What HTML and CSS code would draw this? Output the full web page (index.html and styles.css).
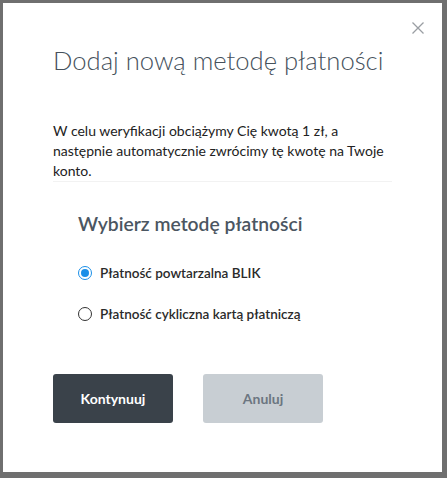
FILE: index.html
```html
<!DOCTYPE html>
<html lang="pl">
<head>
<meta charset="utf-8">
<link rel="stylesheet" href="styles.css">
</head>
<body>
<div class="backdrop">
  <div class="modal">
    <button class="close" aria-label="Zamknij">
      <svg width="12" height="12" viewBox="0 0 12 12"><path d="M0.5 0.5L11.5 11.5M11.5 0.5L0.5 11.5" stroke="#9a9ea3" stroke-width="1.3" fill="none"/></svg>
    </button>
    <h1 class="title">Dodaj nową metodę płatności</h1>
    <p class="info">W celu weryfikacji obciążymy Cię kwotą 1 zł, a następnie automatycznie zwrócimy tę kwotę na Twoje konto.</p>
    <div class="methods">
      <h2 class="subtitle">Wybierz metodę płatności</h2>
      <label class="option"><span class="radio checked"></span>Płatność powtarzalna BLIK</label>
      <label class="option"><span class="radio"></span>Płatność cykliczna kartą płatniczą</label>
    </div>
    <div class="actions">
      <button class="btn primary">Kontynuuj</button>
      <button class="btn secondary">Anuluj</button>
    </div>
  </div>
</div>
</body>
</html>
```
FILE: styles.css
```css
html, body {
  margin: 0;
  padding: 0;
}
body {
  background: #6f6f6f;
  font-family: "Lato", "Open Sans", sans-serif;
}
.backdrop {
  padding: 3px 5px 6px 3px;
  height: 478px;
  box-sizing: border-box;
}
.modal {
  position: relative;
  background: #fff;
  height: 469px;
  box-sizing: border-box;
  padding: 0 50px;
}
.close {
  position: absolute;
  top: 19px;
  right: 18px;
  width: 12px;
  height: 12px;
  padding: 0;
  border: 0;
  background: none;
  display: block;
}
.close svg { display: block; }
.title {
  margin: 0;
  padding-top: 39px;
  font-size: 25.6px;
  font-weight: 300;
  line-height: 36px;
  color: #46515c;
  white-space: nowrap;
}
.info {
  margin: 43px 0 0;
  font-size: 14px;
  line-height: 20px;
  color: #222;
  border-bottom: 1px solid #f2f2f2;
}
.methods {
  padding-left: 25px;
  padding-top: 28px;
}
.subtitle {
  margin: 0 0 25px;
  font-size: 19.3px;
  font-weight: 600;
  line-height: 28px;
  color: #4b5661;
}
.option {
  display: flex;
  align-items: center;
  gap: 8px;
  font-size: 13.5px;
  font-weight: 600;
  color: #2a2a2a;
  height: 20px;
  margin-bottom: 21px;
}
.radio {
  width: 12px;
  height: 12px;
  border: 1px solid #333;
  border-radius: 50%;
  box-sizing: content-box;
  position: relative;
  flex: none;
}
.radio.checked {
  border-color: #1a8fe8;
}
.radio.checked::after {
  content: "";
  position: absolute;
  inset: 2px;
  border-radius: 50%;
  background: #1a8fe8;
}
.actions {
  display: flex;
  gap: 30px;
  margin-top: 50px;
}
.btn {
  width: 120px;
  height: 49px;
  border: 0;
  border-radius: 3px;
  font-family: inherit;
  font-size: 14px;
  font-weight: 700;
}
.primary {
  background: #3a424a;
  color: #fff;
}
.secondary {
  background: #c8ced3;
  color: #6c7681;
}
```
